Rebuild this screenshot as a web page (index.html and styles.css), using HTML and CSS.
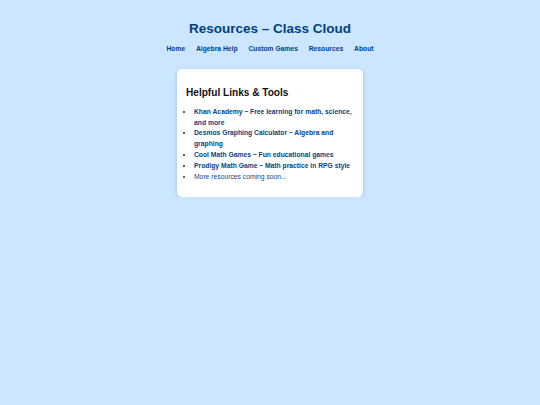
FILE: index.html
```html
<!DOCTYPE html>
<html lang="en">
<head>
<meta charset="utf-8">
<title>Resources – Class Cloud</title>
<link rel="stylesheet" href="styles.css">
</head>
<body>
<header class="site-header">
  <h1 class="site-title">Resources – Class Cloud</h1>
  <nav class="site-nav">
    <a href="#">Home</a>
    <a href="#">Algebra Help</a>
    <a href="#">Custom Games</a>
    <a href="#">Resources</a>
    <a href="#">About</a>
  </nav>
</header>
<main class="content">
  <section class="card">
    <h2 class="card-title">Helpful Links &amp; Tools</h2>
    <ul class="links">
      <li><a href="#">Khan Academy – Free learning for math, science, and more</a></li>
      <li><a href="#">Desmos Graphing Calculator – Algebra and graphing</a></li>
      <li><a href="#">Cool Math Games – Fun educational games</a></li>
      <li><a href="#">Prodigy Math Game – Math practice in RPG style</a></li>
      <li class="note">More resources coming soon...</li>
    </ul>
  </section>
</main>
</body>
</html>
```
FILE: styles.css
```css
* { box-sizing: border-box; }
body {
  margin: 0;
  background: #cce6ff;
  font-family: "Liberation Sans", Arial, sans-serif;
  color: #003366;
}
.site-header {
  padding-top: 21px;
  text-align: center;
}
.site-title {
  margin: 0;
  font-size: 13.5px;
  line-height: 16px;
  font-weight: bold;
  color: #004080;
}
.site-nav {
  margin-top: 7px;
  display: flex;
  justify-content: center;
  gap: 10.8px;
  line-height: 10px;
}
.site-nav a {
  font-size: 6.75px;
  font-weight: bold;
  color: #004080;
  text-decoration: none;
}
.content {
  display: flex;
  justify-content: center;
  margin-top: 15px;
}
.card {
  width: 186px;
  background: #ffffff;
  border-radius: 5px;
  padding: 9px;
  box-shadow: 0 1px 4px rgba(0, 0, 0, 0.18);
}
.card-title {
  margin: 9px 0 0;
  font-size: 10.1px;
  line-height: 12px;
  font-weight: bold;
  color: #111111;
}
.links {
  margin: 7.8px 0 5.6px;
  padding-left: 8px;
  font-size: 6.75px;
  line-height: 10.8px;
}
.links li { color: #003366; }
.links a {
  color: #0b3f7d;
  font-weight: bold;
  text-decoration: none;
}
.links .note { color: #1a4a80; }
```
